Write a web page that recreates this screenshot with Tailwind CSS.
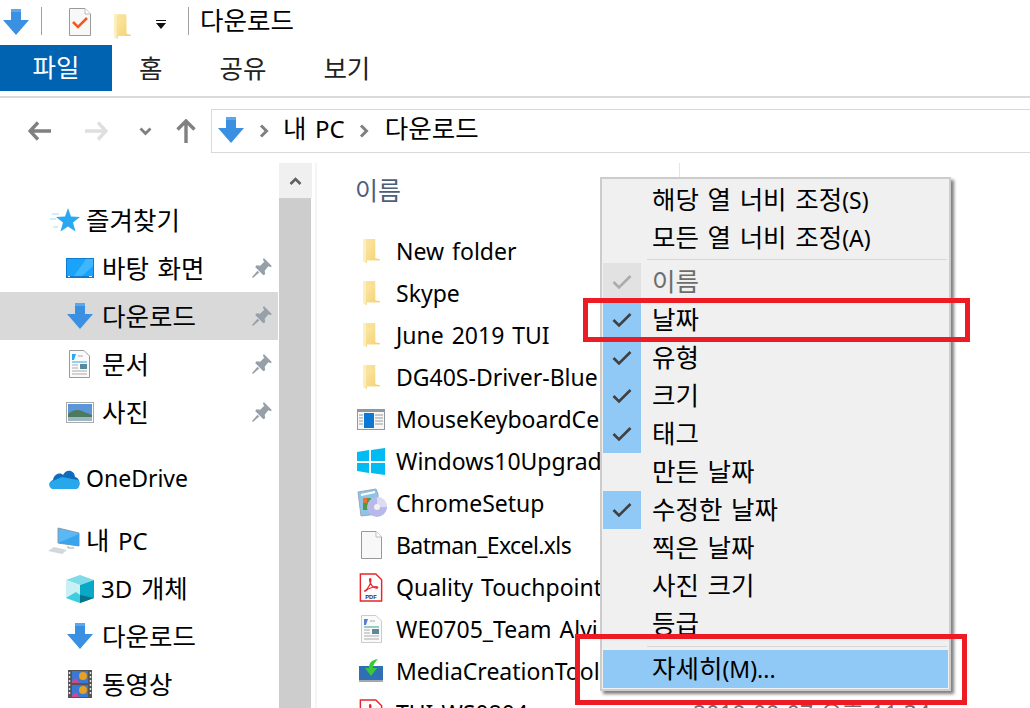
<!DOCTYPE html>
<html lang="ko">
<head>
<meta charset="utf-8">
<script src="https://cdn.jsdelivr.net/npm/@tailwindcss/browser@4"></script>
</head>
<body class="bg-white">
<svg width="0" height="0" class="absolute">
  <defs>
    <linearGradient id="fold" x1="0" y1="0" x2="1" y2="1"><stop offset="0" stop-color="#fbe7a6"/><stop offset="1" stop-color="#f5cf6a"/></linearGradient>
    <symbol id="dl" viewBox="0 0 26 26"><path d="M8 0H18V11H26L13 26L0 11H8Z" fill="#3b90e2"/><path d="M8 0H18V3H8Z" fill="#5aa7ee"/></symbol>
    <symbol id="folder" viewBox="0 0 19 28"><path d="M1 1H14V22L19 23V24H5V27L1 25Z" fill="url(#fold)"/><path d="M1 1H4V26.500L1 25Z" fill="#fdf0c0"/><path d="M4 7L14 4V22L19 23V24H5V27L4 26.500Z" fill="url(#fold)"/></symbol>
    <symbol id="pin" viewBox="0 0 22 22"><path d="M13 0L22 9L20 10L18 9L14 14L14.500 18L12.500 19L3.500 10L5 8L9 8.500L13.500 4L12 2Z" fill="#97a0a8"/><path d="M6 14L0 21L1 22L8 16Z" fill="#97a0a8"/></symbol>
    <symbol id="chk" viewBox="0 0 20 16"><path d="M1.500 8L7 13.500L18.500 2" fill="none" stroke="currentColor" stroke-width="2.600"/></symbol>
    <symbol id="pdf" viewBox="0 0 24 30"><path d="M1 1H17L23 7V29H1Z" fill="#fff" stroke="#e8262a" stroke-width="1.500"/><path d="M5 19C9 17 13 9 11.500 6C10 5 10 9 13 13C15 16 19 16 19 15C18 13 10 15 6 19" fill="none" stroke="#e8262a" stroke-width="1.300"/><text x="12" y="27" text-anchor="middle" font-size="6" font-weight="700" font-family="Liberation Sans" fill="#333">PDF</text></symbol>
  </defs>
</svg>

<div class="relative w-[1030px] h-[708px] overflow-hidden bg-white text-black text-[23px] leading-none [word-spacing:2px] font-['Noto_Sans','Noto_Sans_CJK_KR',sans-serif]">

  <!-- title bar -->
  <header class="flex items-center h-[45px] pl-[3px]">
    <svg class="w-[26px] h-[26px] -mt-[1px]"><use href="#dl"/></svg>
    <div class="w-px h-[28px] bg-[#a0a0a0] ml-[12px] -mt-[3px]"></div>
    <svg class="ml-[27px] w-[22px] h-[28px] -mt-[1px]" viewBox="0 0 22 28"><path d="M.500.500H16L21.500 6V27.500H.500Z" fill="#f8f8f8" stroke="#9a9a9a"/><path d="M16 .500V6H21.500" fill="#fff" stroke="#bbb"/><path d="M4 14L9 19L18 10" fill="none" stroke="#f15a1c" stroke-width="2.500"/></svg>
    <svg class="ml-[22px] w-[18px] h-[27px] mt-[7px]"><use href="#folder"/></svg>
    <svg class="ml-[24px] w-[12px] h-[10px] mt-[4px]" viewBox="0 0 12 10"><path d="M1 0H11V1H1Z M1 3H11L6 9Z" fill="#111"/></svg>
    <div class="w-px h-[28px] bg-[#a0a0a0] ml-[21px] -mt-[3px]"></div>
    <span class="ml-[11px] -mt-[3px] text-[25.5px]">다운로드</span>
  </header>

  <!-- ribbon tabs -->
  <nav class="flex h-[46px] items-center text-[#222] text-[25.5px]">
    <div class="flex items-center justify-center w-[112px] h-full bg-[#0063b1] text-white">파일</div>
    <div class="ml-[27px] mt-[1px]">홈</div>
    <div class="ml-[57px] mt-[1px]">공유</div>
    <div class="ml-[57px] mt-[1px]">보기</div>
  </nav>
  <div class="h-[2px] mt-[5px] bg-[#dadada]"></div>

  <!-- address row -->
  <div class="flex h-[44px] mt-[11px] items-center">
    <div class="flex items-center w-[211px] shrink-0 pl-[28px] text-[#808080]">
      <svg class="w-[23px] h-[20px]" viewBox="0 0 23 20"><path d="M10 1.500L2 10L10 18.500M2.500 10H23" fill="none" stroke="#808080" stroke-width="3.400"/></svg>
      <svg class="ml-[34px] w-[23px] h-[20px]" viewBox="0 0 23 20"><path d="M13 1.500L21 10L13 18.500M20.500 10H0" fill="none" stroke="#dfdfdf" stroke-width="3.400"/></svg>
      <svg class="ml-[31px] w-[13px] h-[9px]" viewBox="0 0 13 9"><path d="M1.500 1.500L6.500 6.500L11.500 1.500" fill="none" stroke="#808080" stroke-width="2.800"/></svg>
      <svg class="ml-[24px] w-[20px] h-[24px]" viewBox="0 0 20 24"><path d="M1.500 10.500L10 2L18.500 10.500M10 2.500V24" fill="none" stroke="#808080" stroke-width="3.400"/></svg>
    </div>
    <div class="flex items-center flex-1 h-full border border-r-0 border-[#d9d9d9] pl-[6px]">
      <svg class="w-[26px] h-[26px] -mt-[2px]"><use href="#dl"/></svg>
      <svg class="ml-[15px] w-[10px] h-[14px]" viewBox="0 0 10 14"><path d="M2 1.500L7.500 7L2 12.500" fill="none" stroke="#808080" stroke-width="3"/></svg>
      <span class="ml-[14px] mb-[4px] text-[25.5px]">내 <span class="text-[24px]">PC</span></span>
      <svg class="ml-[14px] w-[10px] h-[14px]" viewBox="0 0 10 14"><path d="M2 1.500L7.500 7L2 12.500" fill="none" stroke="#808080" stroke-width="3"/></svg>
      <span class="ml-[16px] mb-[4px] text-[25.5px]">다운로드</span>
    </div>
  </div>

  <!-- body -->
  <main class="flex mt-[10px]">
    <!-- navigation pane -->
    <aside class="w-[278px] shrink-0 pt-[33px] text-[25.5px]">
      <div class="flex items-center h-[48px] pl-[50px]">
        <svg class="w-[30px] h-[26px]" viewBox="0 0 30 26"><path d="M18 1L21 9.500L30 10L23 15.500L25.500 24.500L18 19.500L10.500 24.500L13 15.500L6 10L15 9.500Z" fill="#2aa8f2"/><path d="M2 7H9M0 12H6M3 20H8" stroke="#a9dcf8" stroke-width="1"/></svg>
        <span class="ml-[6px] mt-[2px]">즐겨찾기</span>
      </div>
      <div class="flex items-center h-[48px] pl-[66px] pr-[6px]">
        <svg class="w-[28px] h-[21px]" viewBox="0 0 28 21"><rect width="28" height="20" fill="#0f7ccf"/><rect x="1" y="1" width="26" height="17" fill="#19a3fb"/><path d="M8 18L20 1H27V8L16 18Z" fill="#3fb6ff"/><path d="M2 18.500H4M23 18.500H26" stroke="#fff"/></svg>
        <span class="ml-[8px] mt-[2px] flex-1">바탕 화면</span>
        <svg class="w-[20px] h-[20px]"><use href="#pin"/></svg>
      </div>
      <div class="flex items-center h-[48px] pl-[67px] pr-[6px] bg-[#d9d9d9]">
        <svg class="w-[26px] h-[26px]"><use href="#dl"/></svg>
        <span class="ml-[9px] mt-[2px] flex-1">다운로드</span>
        <svg class="w-[20px] h-[20px]"><use href="#pin"/></svg>
      </div>
      <div class="flex items-center h-[48px] pl-[69px] pr-[6px]">
        <svg class="w-[21px] h-[28px]" viewBox="0 0 21 28"><path d="M.500.500H15L20.500 6V27.500H.500Z" fill="#fafafa" stroke="#999"/><path d="M3 4H7L5 10H3Z" fill="#2aa8f2"/><path d="M3 12H18" stroke="#2aa8f2"/><path d="M3 15H9M3 18H9M3 21H18M3 24H18M9 6H14" stroke="#aaa"/><rect x="11" y="14" width="7" height="5" fill="#5a8a9a"/></svg>
        <span class="ml-[12px] mt-[2px] flex-1">문서</span>
        <svg class="w-[20px] h-[20px]"><use href="#pin"/></svg>
      </div>
      <div class="flex items-center h-[48px] pl-[66px] pr-[6px]">
        <svg class="w-[28px] h-[21px]" viewBox="0 0 28 21"><rect x=".5" y=".5" width="27" height="20" fill="#fff" stroke="#aaa"/><rect x="2" y="2" width="24" height="17" fill="#5a96d8"/><path d="M2 12Q9 6 16 9T26 13V19H2Z" fill="#4d7a5c"/><path d="M2 15H26V19H2Z" fill="#9db8c4"/></svg>
        <span class="ml-[8px] mt-[2px] flex-1">사진</span>
        <svg class="w-[20px] h-[20px]"><use href="#pin"/></svg>
      </div>
      <div class="flex items-center h-[48px] mt-[18px] pl-[48px]">
        <svg class="w-[32px] h-[21px]" viewBox="0 0 32 21"><path d="M6 21C1 21 0 14 5 12C6 6 12 4 15 7C18 0 27 2 27 9C33 10 33 21 27 21Z" fill="#0f6cbd"/><path d="M6 21C2 21 0 17 2 14L14 9L30 12C33 15 31 21 27 21Z" fill="#28a8ea"/></svg>
        <span class="ml-[6px] text-[23px]">OneDrive</span>
      </div>
      <div class="flex items-center h-[48px] mt-[15px] pl-[48px]">
        <svg class="w-[32px] h-[28px]" viewBox="0 0 32 28"><path d="M10 1L31 6V19L10 16Z" fill="#5ab8f6" stroke="#8a9aa8"/><path d="M10 16L31 7V19Z" fill="#3aa4ec"/><path d="M20 19V21H26" stroke="#9aa" fill="none"/><path d="M6 20L19 23L14 27L0 24Z" fill="#d4d8dc"/></svg>
        <span class="ml-[6px]">내 <span class="text-[24px]">PC</span></span>
      </div>
      <div class="flex items-center h-[47px] pl-[66px]">
        <svg class="w-[28px] h-[28px]" viewBox="0 0 28 28"><path d="M14 0L28 5L14 10L0 5Z" fill="#7fdbe9"/><path d="M0 5L14 10V28L0 23Z" fill="#c9f0f4"/><path d="M14 10L28 5V23L14 28Z" fill="#0aa8c7"/><path d="M0 23L10 17L14 20V28Z" fill="#3ccde0"/><path d="M14 20L28 23L14 28Z" fill="#07738a"/></svg>
        <span class="ml-[7px]"><span class="text-[24px]">3D</span> 개체</span>
      </div>
      <div class="flex items-center h-[48px] pl-[67px]">
        <svg class="w-[26px] h-[26px]"><use href="#dl"/></svg>
        <span class="ml-[9px] mt-[2px]">다운로드</span>
      </div>
      <div class="flex items-center h-[48px] pl-[68px]">
        <svg class="w-[24px] h-[28px]" viewBox="0 0 24 28"><rect width="24" height="28" fill="#555"/><rect x="4" y="1" width="16" height="12" fill="#3a78d8"/><rect x="4" y="15" width="16" height="12" fill="#3a78d8"/><circle cx="15" cy="6" r="4" fill="#e8a020"/><circle cx="15" cy="20" r="4" fill="#e8a020"/><path d="M4 11L8 8L11 13H4ZM4 25L8 22L11 27H4Z" fill="#d04a8a"/><path d="M1.500 2V26M22.500 2V26" stroke="#ddd" stroke-dasharray="2 2" stroke-width="1.500"/></svg>
        <span class="ml-[10px] mt-[2px]">동영상</span>
      </div>
    </aside>

    <!-- scrollbar -->
    <div class="w-[33px] ml-px shrink-0 flex flex-col h-[545px]">
      <div class="flex items-center justify-center h-[35px] bg-[#f0f0f0] pr-px">
        <svg class="w-[13px] h-[8px]" viewBox="0 0 13 8"><path d="M1.500 7L6.500 2L11.500 7" fill="none" stroke="#606060" stroke-width="2.600"/></svg>
      </div>
      <div class="flex-1 bg-[#cdcdcd] mr-px"></div>
    </div>
    <div class="w-[2px] ml-[3px] h-[545px] bg-[#f5f5f5]"></div>

    <!-- file list -->
    <section class="flex-1 min-w-0 pl-[37px]">
      <div class="flex items-center h-[54px] text-[#4c607a]">
        <span class="text-[25px] ml-px">이름</span>
      </div>
      <div class="mt-[13px] whitespace-nowrap">
        <div class="flex items-center h-[42px]"><div class="flex justify-center w-[34px]"><svg class="w-[20px] h-[26px]"><use href="#folder"/></svg></div><span class="ml-[8px] w-[297px]">New folder</span></div>
        <div class="flex items-center h-[42px]"><div class="flex justify-center w-[34px]"><svg class="w-[20px] h-[26px]"><use href="#folder"/></svg></div><span class="ml-[8px] w-[297px]">Skype</span></div>
        <div class="flex items-center h-[42px]"><div class="flex justify-center w-[34px]"><svg class="w-[20px] h-[26px]"><use href="#folder"/></svg></div><span class="ml-[8px] w-[297px]">June 2019 TUI</span></div>
        <div class="flex items-center h-[42px]"><div class="flex justify-center w-[34px]"><svg class="w-[20px] h-[26px]"><use href="#folder"/></svg></div><span class="ml-[8px] w-[297px]">DG40S-Driver-Blue</span></div>
        <div class="flex items-center h-[42px]"><div class="flex justify-center w-[34px]"><svg class="w-[28px] h-[21px]" viewBox="0 0 28 21"><rect width="28" height="21" fill="#8f98a0"/><rect x="1" y="3" width="26" height="17" fill="#f7f7f7"/><rect x="7" y="4" width="10" height="15" fill="#0b78d6"/><path d="M2 6H6M2 9H6M2 12H6M2 15H6M18 6H26M18 9H26M18 12H26M18 15H26" stroke="#999"/></svg></div><span class="ml-[8px] w-[297px]">MouseKeyboardCe</span></div>
        <div class="flex items-center h-[42px]"><div class="flex justify-center w-[34px]"><svg class="w-[28px] h-[27px]" viewBox="0 0 28 27"><path d="M0 4L12 2V13H0ZM14 2L28 0V13H14ZM0 15H12V25L0 23ZM14 15H28V27L14 25Z" fill="#00bcf2"/></svg></div><span class="ml-[8px] w-[297px]">Windows10Upgrad</span></div>
        <div class="flex items-center h-[42px]"><div class="flex justify-center w-[34px]"><svg class="w-[31px] h-[31px]" viewBox="0 0 31 31"><path d="M2 4L20 1L22 6V26L5 28Z" fill="#8ec4e8" stroke="#9ab"/><path d="M5 7L19 4" stroke="#fff" stroke-width="2"/><rect x="7" y="10" width="8" height="12" fill="#4a9a48"/><rect x="7" y="10" width="4" height="5" fill="#e8742a"/><circle cx="21" cy="19" r="10" fill="#b8b8ea"/><path d="M21 9A10 10 0 0 1 31 19H21Z" fill="#dcdcf6"/><circle cx="21" cy="19" r="3" fill="#f2f2f2"/></svg></div><span class="ml-[8px] w-[297px]">ChromeSetup</span></div>
        <div class="flex items-center h-[42px]"><div class="flex justify-center w-[34px]"><svg class="w-[21px] h-[28px]" viewBox="0 0 21 28"><path d="M.500.500H15L20.500 6V27.500H.500Z" fill="#f8f8f8" stroke="#999"/><path d="M15 .500V6H20.500" fill="#fff" stroke="#bbb"/></svg></div><span class="ml-[8px] w-[297px] tracking-[-0.6px]">Batman_Excel.xls</span></div>
        <div class="flex items-center h-[42px]"><div class="flex justify-center w-[34px]"><svg class="w-[24px] h-[29px]"><use href="#pdf"/></svg></div><span class="ml-[8px] w-[297px]">Quality Touchpoint</span></div>
        <div class="flex items-center h-[42px]"><div class="flex justify-center w-[34px]"><svg class="w-[23px] h-[28px]" viewBox="0 0 21 28"><path d="M.500.500H15L20.500 6V27.500H.500Z" fill="#fafafa" stroke="#ccc"/><path d="M3 4H7L5 10H3Z" fill="#5a7ed8"/><path d="M3 12H18" stroke="#3aa08a"/><path d="M3 15H9M3 18H9M3 21H18M3 24H18M9 6H14" stroke="#aaa"/><rect x="11" y="14" width="7" height="5" fill="#5a8a9a"/></svg></div><span class="ml-[8px] w-[297px]">WE0705_Team Alvi</span></div>
        <div class="flex items-center h-[42px]"><div class="flex justify-center w-[34px]"><svg class="w-[24px] h-[24px]" viewBox="0 0 24 24"><rect y="7" width="24" height="15" fill="#2f6fb4"/><rect y="21" width="24" height="2" fill="#a0a8b0"/><path d="M19 0C12 1 10 4 10 9H6L12 17L18 9H14C14 6 16 3 19 0Z" fill="#38c838"/></svg></div><span class="ml-[8px] w-[297px]">MediaCreationTool</span></div>
        <div class="flex items-center h-[42px]"><div class="flex justify-center w-[34px]"><svg class="w-[24px] h-[29px]"><use href="#pdf"/></svg></div><span class="ml-[8px] w-[297px]">TUI WS0804</span><span class="text-[#6d6d6d]">2019-09-07 오후 11:34</span></div>
      </div>
    </section>
  </main>

  <!-- column divider in header -->
  <div class="absolute left-[679px] top-[163px] w-px h-[40px] bg-[#e5e5e5]"></div>

  <!-- context menu -->
  <div class="absolute left-[600px] top-[177px] w-[351px] h-[514px] bg-[#f0f0f0] border-2 border-[#cccccc] pl-px pt-[2px] shadow-[3px_3px_3px_rgba(0,0,0,0.5)] text-[25.5px]">
    <div class="flex items-center h-[38px] pl-[49px]"><span>해당 열 너비 조정<span class="text-[23px]">(S)</span></span></div>
    <div class="flex items-center h-[38px] pl-[49px]"><span>모든 열 너비 조정<span class="text-[23px]">(A)</span></span></div>
    <div class="h-px ml-[44px] mr-[2px] mt-[2px] mb-[3px] bg-[#d7d7d7]"></div>
    <div class="flex items-center h-[38px] text-[#6d6d6d]"><div class="flex items-center justify-center w-[38px] h-full bg-[#e2e2e2] text-[#ababab]"><svg class="w-[20px] h-[16px]"><use href="#chk"/></svg></div><span class="ml-[11px]">이름</span></div>
    <div class="flex items-center h-[38px]"><div class="flex items-center justify-center w-[38px] h-full bg-[#90c8f6] text-[#404040]"><svg class="w-[20px] h-[16px]"><use href="#chk"/></svg></div><span class="ml-[11px]">날짜</span></div>
    <div class="flex items-center h-[38px]"><div class="flex items-center justify-center w-[38px] h-full bg-[#90c8f6] text-[#404040]"><svg class="w-[20px] h-[16px]"><use href="#chk"/></svg></div><span class="ml-[11px]">유형</span></div>
    <div class="flex items-center h-[38px]"><div class="flex items-center justify-center w-[38px] h-full bg-[#90c8f6] text-[#404040]"><svg class="w-[20px] h-[16px]"><use href="#chk"/></svg></div><span class="ml-[11px]">크기</span></div>
    <div class="flex items-center h-[38px]"><div class="flex items-center justify-center w-[38px] h-full bg-[#90c8f6] text-[#404040]"><svg class="w-[20px] h-[16px]"><use href="#chk"/></svg></div><span class="ml-[11px]">태그</span></div>
    <div class="flex items-center h-[38px] pl-[49px]"><span>만든 날짜</span></div>
    <div class="flex items-center h-[38px]"><div class="flex items-center justify-center w-[38px] h-full bg-[#90c8f6] text-[#404040]"><svg class="w-[20px] h-[16px]"><use href="#chk"/></svg></div><span class="ml-[11px]">수정한 날짜</span></div>
    <div class="flex items-center h-[38px] pl-[49px]"><span>찍은 날짜</span></div>
    <div class="flex items-center h-[38px] pl-[49px]"><span>사진 크기</span></div>
    <div class="flex items-center h-[38px] pl-[49px]"><span>등급</span></div>
    <div class="h-px ml-[44px] mr-[2px] mt-[3px] mb-[3px] bg-[#d7d7d7]"></div>
    <div class="flex items-center h-[38px] pl-[49px] mr-px bg-[#90c8f6]"><span>자세히<span class="text-[23px]">(M)...</span></span></div>
  </div>

  <!-- red annotation boxes -->
  <div class="absolute left-[583px] top-[298px] w-[387px] h-[44px] border-[5px] border-[#ed1c24]"></div>
  <div class="absolute left-[575px] top-[634px] w-[392px] h-[71px] border-[5px] border-[#ed1c24]"></div>
</div>
</body>
</html>
